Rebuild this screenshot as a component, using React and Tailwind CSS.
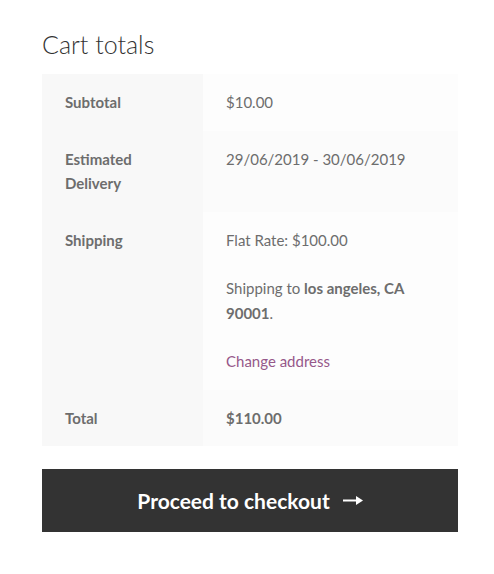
import React from 'react';

const font = { fontFamily: 'Lato, "Noto Sans", sans-serif' };

function Row({ label, children, even }) {
  return (
    <tr>
      <th className="w-[161px] bg-[#f8f8f8] px-[23px] py-4 text-left align-top font-bold text-[#6d6d6d]">
        {label}
      </th>
      <td className={`${even ? 'bg-[#fbfbfb]' : 'bg-[#fdfdfd]'} px-[23px] py-4 align-top text-[#6d6d6d]`}>
        {children}
      </td>
    </tr>
  );
}

export default function App() {
  return (
    <div className="min-h-[574px] bg-white pl-[42px] pr-[36px] pt-[28px]" style={font}>
      <h2 className="text-[25px] font-light leading-[32px] text-[#333333]">Cart totals</h2>

      <table className="mt-[14px] w-full border-collapse text-[15px] leading-[24.5px]">
        <tbody>
          <Row label="Subtotal">$10.00</Row>
          <Row label={<>Estimated<br />Delivery</>} even>
            29/06/2019 - 30/06/2019
          </Row>
          <Row label="Shipping">
            <div>Flat Rate: $100.00</div>
            <p className="mt-[24px]">
              Shipping to <strong className="font-bold">los angeles, CA 90001</strong>.
            </p>
            <a href="#" className="mt-[24px] block text-[#96588a]">Change address</a>
          </Row>
          <Row label="Total" even>
            <strong className="font-bold">$110.00</strong>
          </Row>
        </tbody>
      </table>

      <button
        type="button"
        className="mt-[23px] flex h-[63px] w-full items-center justify-center gap-[13px] bg-[#333333] text-[21px] font-bold text-white"
      >
        Proceed to checkout
        <svg width="20" height="9" viewBox="0 0 20 9" fill="white">
          <rect x="0" y="3.5" width="14" height="2" />
          <polygon points="13,0 20,4.5 13,9" />
        </svg>
      </button>
    </div>
  );
}
